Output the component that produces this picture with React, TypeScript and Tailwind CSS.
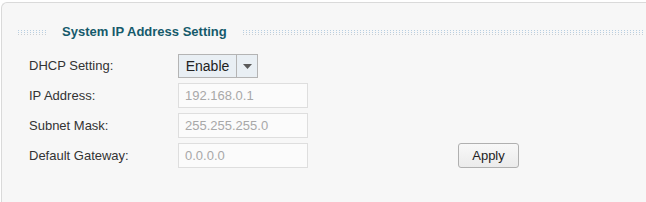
import React from "react";

const dots = (color: string) =>
  color === "blue"
    ? "h-px bg-[repeating-linear-gradient(90deg,#b7cfe2_0_1px,transparent_1px_3px)]"
    : "h-px bg-[repeating-linear-gradient(90deg,#c9ced3_0_1px,transparent_1px_3px)]";

function DotLine({ className }: { className: string }) {
  return (
    <div className={`flex flex-col gap-px ${className}`}>
      <div className={dots("blue")} />
      <div className={dots("blue")} />
      <div className={dots("gray")} />
    </div>
  );
}

function Field({ value }: { value: string }) {
  return (
    <div className="w-[130px] h-[25px] border border-[#dedede] bg-[#fbfbfb] pl-[6px] flex items-center text-[13px] text-[#a8a8a8]">
      {value}
    </div>
  );
}

export default function App() {
  const rows = [
    { label: "IP Address:", value: "192.168.0.1" },
    { label: "Subnet Mask:", value: "255.255.255.0" },
  ];

  return (
    <div className="w-[646px] h-[202px] overflow-hidden bg-white pl-px pt-[2px] font-['Liberation_Sans',Arial,sans-serif]">
      <div className="w-[700px] h-[230px] border-t border-l border-[#dadada] rounded-tl-[6px] bg-[#f7f7f7]">
        {/* title */}
        <div className="flex items-center mt-[19px] h-[20px]">
          <DotLine className="ml-[16px] w-[30px]" />
          <span className="ml-[14px] mr-[16px] text-[13px] font-bold text-[#155a6b]">
            System IP Address Setting
          </span>
          <DotLine className="w-[400px]" />
        </div>

        <div className="mt-[12px] pl-[27px] flex flex-col gap-[5px] text-[13px] text-[#333]">
          <div className="flex items-center h-[24px]">
            <div className="w-[149px]">DHCP Setting:</div>
            <div className="flex h-[24px] border border-[#b4b4b4] bg-[#e9eff4]">
              <div className="w-[57px] flex items-center justify-center text-[14px] text-[#222]">Enable</div>
              <div className="w-[21px] border-l border-[#b4b4b4] flex items-center justify-center">
                <svg width="9" height="5" viewBox="0 0 9 5">
                  <path d="M0 0h9L4.5 5z" fill="#5a5a5a" />
                </svg>
              </div>
            </div>
          </div>
          {rows.map((r) => (
            <div key={r.label} className="flex items-center">
              <div className="w-[149px]">{r.label}</div>
              <Field value={r.value} />
            </div>
          ))}
          <div className="flex items-center">
            <div className="w-[149px]">Default Gateway:</div>
            <Field value="0.0.0.0" />
            <button className="ml-[150px] w-[61px] h-[25px] rounded-[3px] border border-[#b0b0b0] bg-gradient-to-b from-[#f8f8f8] to-[#ebebeb] text-[13px] text-[#222]">
              Apply
            </button>
          </div>
        </div>
      </div>
    </div>
  );
}
